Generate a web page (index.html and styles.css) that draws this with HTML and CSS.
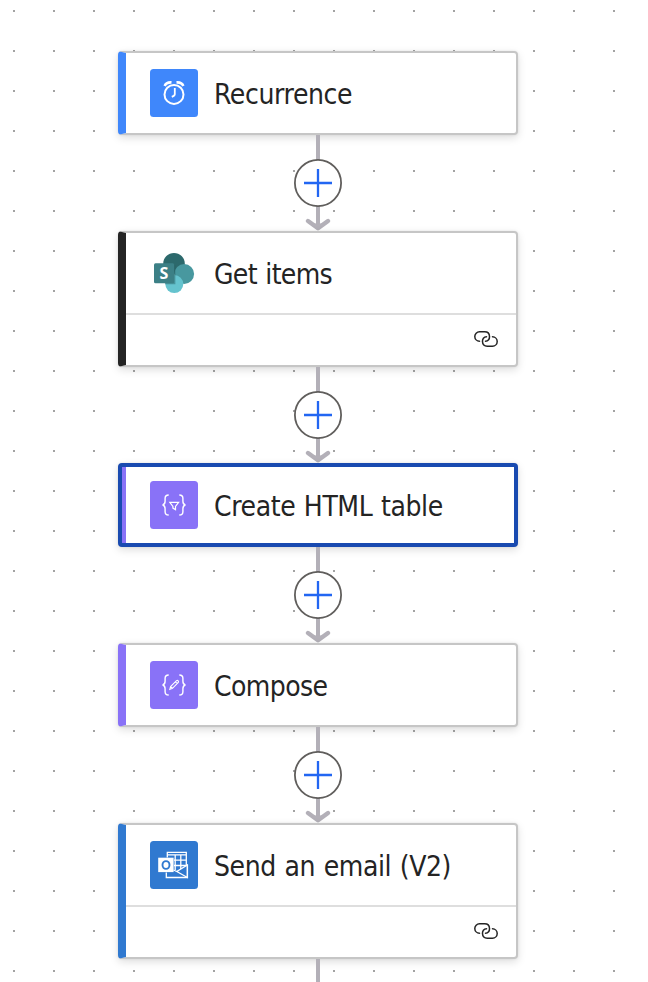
FILE: index.html
```
<!DOCTYPE html>
<html lang="en">
<head>
<meta charset="utf-8">
<title>Flow designer</title>
<link rel="stylesheet" href="styles.css">
</head>
<body>
<svg class="defs" aria-hidden="true">
  <symbol id="add" viewBox="0 0 48 96">
    <path d="M24 0v91" stroke="#b3b0b8" stroke-width="4"/>
    <path d="M14 86l10 7.3L34 86" fill="none" stroke="#b3b0b8" stroke-width="4.4" stroke-linecap="round" stroke-linejoin="round"/>
    <path d="M16 88.5h16l-8 5.5z" fill="#b3b0b8"/>
    <circle cx="24" cy="48" r="23.1" fill="#fff" stroke="#605e5c" stroke-width="1.8"/>
    <path d="M24 34v28M10 48h28" stroke="#2266f2" stroke-width="2.3"/>
  </symbol>
  <symbol id="link" viewBox="0 0 24 16">
    <g fill="none" stroke="#242424" stroke-width="1.5" stroke-linecap="round">
      <path d="M5.5 10.2A4.7 4.7 0 0 1 5.5.8h5.2c6.3 0 6.3 9.4.8 9.4"/>
      <path d="M18.5 5.8a4.7 4.7 0 0 1 0 9.4h-5.2c-6.3 0-6.3-9.4-.8-9.4"/>
    </g>
  </symbol>
  <symbol id="braces" viewBox="0 0 48 48">
    <path d="M18.7 14c-2.8 0-3.6.8-3.6 3.3v3c0 2.3-.5 3.2-2.5 3.7 2 .5 2.5 1.4 2.5 3.7v3c0 2.5.8 3.3 3.6 3.3M29.3 14c2.8 0 3.6.8 3.6 3.3v3c0 2.3.5 3.2 2.5 3.7-2 .5-2.5 1.4-2.5 3.7v3c0 2.5-.8 3.3-3.6 3.3" fill="none" stroke="#fff" stroke-width="1.4"/>
  </symbol>
</svg>
<main class="flow">
  <section class="card blue">
    <header class="head">
      <svg class="icon" viewBox="0 0 48 48"><rect width="48" height="48" rx="3.5" fill="#3f87fb"/>
        <g fill="none" stroke="#fff"><circle cx="24" cy="25.4" r="9.5" stroke-width="2"/><path d="M24.8 19v6.2q0 1.4-3 2.7" stroke-width="1.8"/><path d="M14.7 17c.7-2.1 3.2-3.8 6.8-3.6M33.3 17c-.7-2.1-3.2-3.8-6.8-3.6" stroke-width="2.6"/></g>
      </svg>
      <h2 class="title recurrence">Recurrence</h2>
    </header>
  </section>
  <svg class="connector"><use href="#add"/></svg>
  <section class="card black">
    <header class="head">
      <svg class="icon" viewBox="0 0 48 48">
        <circle cx="24" cy="14.7" r="10.8" fill="#2c696c"/><circle cx="34.2" cy="25" r="9.9" fill="#48989f"/><circle cx="24.3" cy="35.1" r="9" fill="#65c3ce"/>
        <path d="M13.4 15.8h10c1.4 0 2 .7 2 2v17.5H15z" fill="#245d61" opacity=".45"/>
        <rect x="4" y="14.2" width="20.2" height="20" rx="1.5" fill="#3c8086"/>
        <text class="logo-s" x="14" y="29.9" text-anchor="middle">S</text>
      </svg>
      <h2 class="title items">Get items</h2>
    </header>
    <footer class="foot"><svg class="link"><use href="#link"/></svg></footer>
  </section>
  <svg class="connector"><use href="#add"/></svg>
  <section class="card purple selected">
    <header class="head">
      <svg class="icon" viewBox="0 0 48 48"><rect width="48" height="48" rx="3.5" fill="#8972f7"/><use href="#braces"/>
        <path d="M19.8 21.4h8.8l-3.1 4v3.2l-2.6-1.5v-1.7z" fill="none" stroke="#fff" stroke-width="1.2"/>
      </svg>
      <h2 class="title table">Create HTML table</h2>
    </header>
  </section>
  <svg class="connector"><use href="#add"/></svg>
  <section class="card purple">
    <header class="head">
      <svg class="icon" viewBox="0 0 48 48"><rect width="48" height="48" rx="3.5" fill="#8972f7"/><use href="#braces"/>
        <path d="M19.8 28.4l.8-2.8 5.9-5.9q1-.6 1.7.1t.1 1.7l-5.8 5.9zM25.4 20.8l1.9 1.9M20.6 25.7l1.8 1.8" fill="none" stroke="#fff" stroke-width="1.1"/>
      </svg>
      <h2 class="title compose">Compose</h2>
    </header>
  </section>
  <svg class="connector"><use href="#add"/></svg>
  <section class="card outlook">
    <header class="head">
      <svg class="icon" viewBox="0 0 48 48"><rect width="48" height="48" rx="3.5" fill="#3079d0"/>
        <g fill="none" stroke="#fff" stroke-width="1.3">
          <path d="M17.3 16.5v-5.1h19V24M17.3 13.8h19M24 19.2h12.2M24 24.5h12M25.2 14v15M30.8 14v14"/>
          <path d="M37.4 24l-10.6 6.5 10.6 6z" fill="#3079d0"/>
          <path d="M16.3 31.5v5h21.1V23.7M23.5 29l3.3 1.5"/>
        </g>
        <rect x="8.2" y="16.7" width="15.4" height="14.4" fill="#fff"/>
        <ellipse cx="16" cy="24" rx="3.5" ry="3.9" fill="none" stroke="#3079d0" stroke-width="1.9"/>
      </svg>
      <h2 class="title email">Send an email (V2)</h2>
    </header>
    <footer class="foot"><svg class="link"><use href="#link"/></svg></footer>
  </section>
  <div class="tail"></div>
</main>
</body>
</html>
```
FILE: styles.css
```
* { box-sizing: border-box; }
body {
  margin: 0;
  height: 982px;
  overflow: hidden;
  background: #fff;
  font-family: "DejaVu Sans Condensed", "DejaVu Sans", sans-serif;
  font-stretch: condensed;
}
.defs { display: none; }
.flow {
  display: flex;
  flex-direction: column;
  height: 982px;
  padding: 51px 130px 0 118px;
  background-image: linear-gradient(90deg, transparent 2px, #fff 2px), linear-gradient(#a3a3a3 2px, #fff 2px);
  background-size: 40px 40px;
  background-position: 13px 10px;
}
.card {
  --accent: #3f87fb;
  flex: none;
  width: 400px;
  background: #fff;
  border: 2px solid #c6c6c6;
  border-left: 8px solid var(--accent);
  border-radius: 4px;
  box-shadow: 0 3px 8px rgba(0, 0, 0, .13), 0 0 3px rgba(0, 0, 0, .08);
}
.black { --accent: #242424; }
.purple { --accent: #8972f7; }
.outlook { --accent: #3079d0; }
.head {
  display: flex;
  align-items: center;
  gap: 16px;
  height: 80px;
  padding: 16px 0 16px 24px;
}
.selected { border: 4px solid #194ab0; }
.selected .head {
  height: 76px;
  padding-block: 14px;
  border-left: 4px solid var(--accent);
}
.icon { flex: none; width: 48px; height: 48px; }
.logo-s { font: bold 16px "Open Sans", sans-serif; fill: #fff; }
.title {
  margin: 4px 0 0;
  font-size: 28px;
  line-height: 36px;
  font-weight: 400;
  white-space: nowrap;
  color: #242424;
  letter-spacing: -.6px;
}
.recurrence { letter-spacing: -.38px; }
.items { letter-spacing: -.65px; word-spacing: 1px; }
.table { letter-spacing: -.4px; word-spacing: 1px; }
.email { letter-spacing: -.4px; word-spacing: 1px; }
.foot {
  display: flex;
  justify-content: flex-end;
  height: 52px;
  padding: 16px 18px 0 0;
  border-top: 2px solid #dedede;
}
.link { width: 24px; height: 16px; }
.connector { flex: none; width: 48px; height: 96px; margin-left: 176px; }
.tail { width: 4px; height: 23px; margin-left: 198px; background: #b3b0b8; }
```
